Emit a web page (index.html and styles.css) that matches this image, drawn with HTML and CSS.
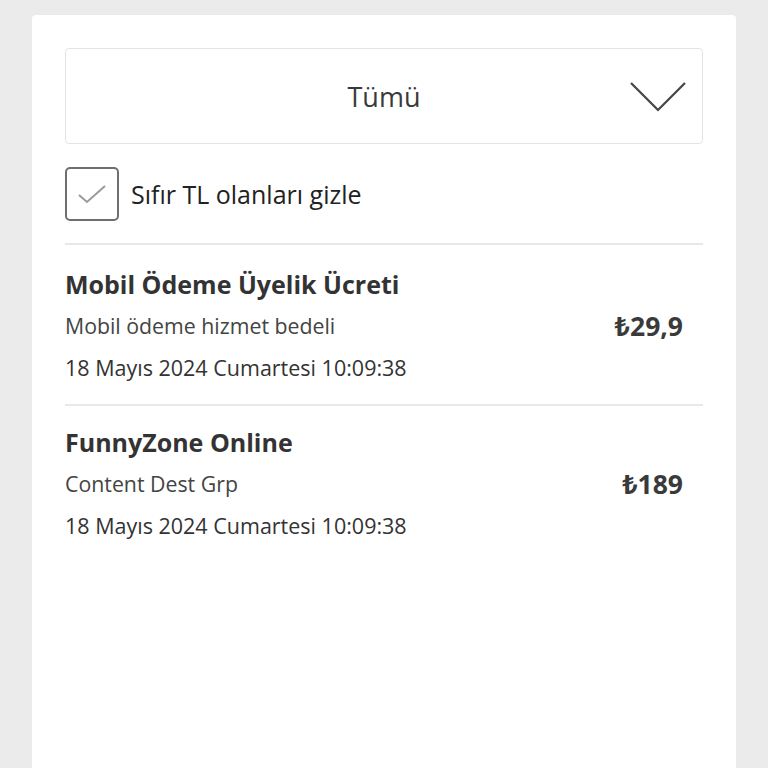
FILE: index.html
```html
<!DOCTYPE html>
<html lang="tr">
<head>
<meta charset="utf-8">
<title>Harcamalar</title>
<link rel="stylesheet" href="styles.css">
</head>
<body>
<main class="card">
  <div class="select">
    <span class="select-label">Tümü</span>
    <svg class="chevron" width="58" height="31" viewBox="0 0 58 31" aria-hidden="true">
      <polyline points="2,2 29,29 56,2" fill="none" stroke="#444" stroke-width="2.2"/>
    </svg>
  </div>
  <label class="check-row">
    <span class="check-box">
      <svg width="30" height="20" viewBox="0 0 30 20" aria-hidden="true">
        <polyline points="2,10 10,17 28,1" fill="none" stroke="#9a9a9a" stroke-width="2"/>
      </svg>
    </span>
    <span class="check-label">Sıfır TL olanları gizle</span>
  </label>
  <ul class="list">
    <li class="item">
      <div class="item-info">
        <div class="item-title">Mobil Ödeme Üyelik Ücreti</div>
        <div class="item-sub">Mobil ödeme hizmet bedeli</div>
        <div class="item-date">18 Mayıs 2024 Cumartesi 10:09:38</div>
      </div>
      <div class="item-price">₺29,9</div>
    </li>
    <li class="item">
      <div class="item-info">
        <div class="item-title">FunnyZone Online</div>
        <div class="item-sub">Content Dest Grp</div>
        <div class="item-date">18 Mayıs 2024 Cumartesi 10:09:38</div>
      </div>
      <div class="item-price">₺189</div>
    </li>
  </ul>
</main>
</body>
</html>
```
FILE: styles.css
```css
html, body {
  margin: 0;
  padding: 0;
  height: 100%;
}
body {
  background: #ebebeb;
  font-family: "Open Sans", "Noto Sans", "DejaVu Sans", sans-serif;
  color: #333;
  overflow: hidden;
}
.card {
  box-sizing: border-box;
  background: #fff;
  margin: 15px 32px 0 32px;
  padding: 33px 33px 0 33px;
  min-height: calc(100vh - 15px);
  border-radius: 4px 4px 0 0;
}
.select {
  box-sizing: border-box;
  height: 96px;
  border: 1px solid #e4e4e4;
  border-radius: 4px;
  display: flex;
  align-items: center;
  justify-content: center;
  position: relative;
}
.select-label {
  font-size: 27px;
  color: #3a3a3a;
}
.chevron {
  position: absolute;
  right: 15px;
  top: 32px;
}
.check-row {
  display: flex;
  align-items: center;
  margin-top: 23px;
  height: 54px;
}
.check-box {
  box-sizing: border-box;
  width: 54px;
  height: 54px;
  border: 2px solid #6e6e6e;
  border-radius: 5px;
  display: flex;
  align-items: center;
  justify-content: center;
  padding-top: 2px;
}
.check-label {
  margin-left: 12px;
  font-size: 25px;
  color: #222;
}
.list {
  list-style: none;
  margin: 22px 0 0 0;
  padding: 0;
}
.item {
  display: flex;
  align-items: center;
  justify-content: space-between;
  border-top: 2px solid #e8e8e8;
  padding: 19px 20px 16px 0;
}
.item + .item {
  padding-top: 16px;
}
.item-title {
  font-size: 25px;
  font-weight: 700;
  line-height: 41px;
  color: #333;
}
.item-sub {
  font-size: 21.3px;
  line-height: 42px;
  color: #444;
}
.item-date {
  font-size: 21.5px;
  line-height: 41px;
  color: #333;
}
.item-price {
  font-size: 26.5px;
  font-weight: 700;
  color: #3a3a3a;
}
```
